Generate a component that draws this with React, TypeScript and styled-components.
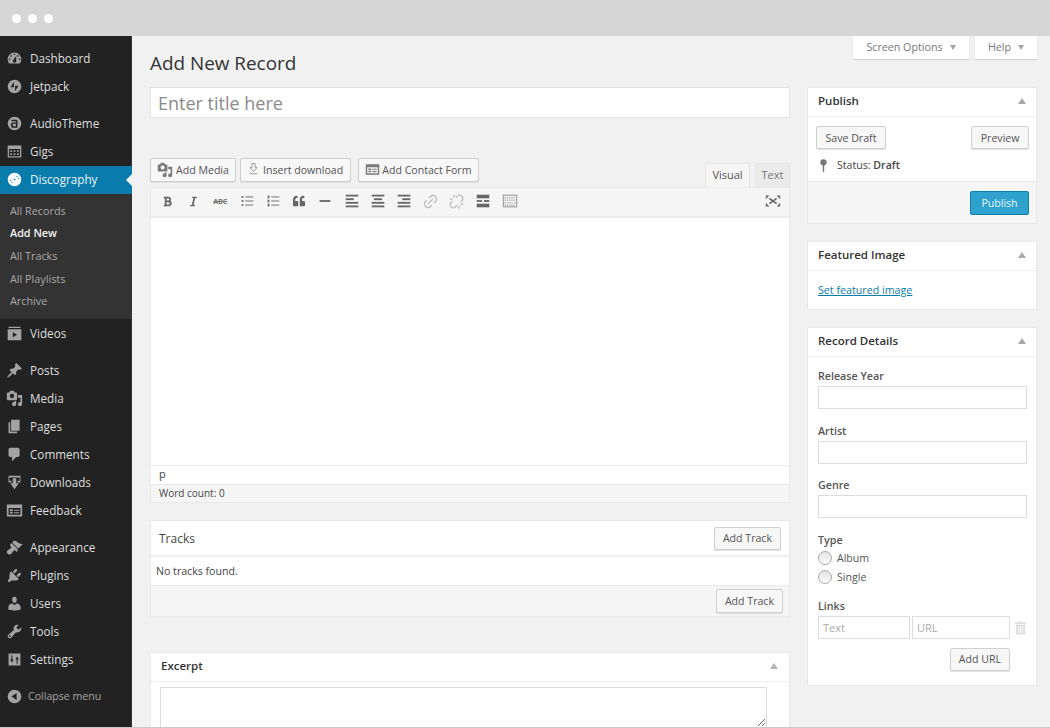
import React from "react";
import styled, { createGlobalStyle } from "styled-components";
import { FaBold, FaItalic, FaQuoteLeft } from "react-icons/fa";
import { Link2, Unlink } from "lucide-react";

const GlobalStyle = createGlobalStyle`
  html, body { margin: 0; padding: 0; height: 100%; overflow: hidden; }
  body { background: #f1f1f1; font-family: "Open Sans", "Liberation Sans", sans-serif; color: #444; }
  * { box-sizing: border-box; }
`;

const Glyph = ({ d }: { d: string }) => (
  <svg viewBox="0 0 20 20" width="100%" height="100%" fill="currentColor">
    <path fillRule="evenodd" d={d} />
  </svg>
);

const mediaPath =
  "M13 11V4c0-.55-.45-1-1-1h-1.670L9 1H5L3.670 3H2c-.55 0-1 .45-1 1v7c0 .55.45 1 1 1h10c.55 0 1-.45 1-1zM7 4.500c1.380 0 2.500 1.120 2.500 2.500S8.380 9.500 7 9.500 4.500 8.380 4.500 7 5.620 4.500 7 4.500zM14 6h5v10.500c0 1.380-1.120 2.500-2.500 2.500S14 17.880 14 16.500s1.120-2.500 2.500-2.500c.170 0 .340.020.500.050V9h-3V6zm-4 8.050V13h2v3.500c0 1.380-1.120 2.500-2.500 2.500S7 17.880 7 16.500 8.120 14 9.500 14c.170 0 .340.020.500.050z";
const formPath =
  "M1 3h18v14H1zM3 7v8h14V7zM4.500 8.500h3.500v2H4.500zM4.500 11.500h3.500v2H4.500zM9.500 9h6v1.200h-6zM9.500 12h6v1.200h-6z";

const menuIcons: Record<string, string> = {
  Dashboard:
    "M3.76 16h12.48c1.1-1.37 1.76-3.11 1.76-5 0-4.42-3.58-8-8-8s-8 3.58-8 8c0 1.89.66 3.63 1.76 5zM10 4c.55 0 1 .45 1 1s-.45 1-1 1-1-.45-1-1 .45-1 1-1zM6 6c.55 0 1 .45 1 1s-.45 1-1 1-1-.45-1-1 .45-1 1-1zm8 0c.55 0 1 .45 1 1s-.45 1-1 1-1-.45-1-1 .45-1 1-1zm-5.37 5.55L12 7v6c0 1.1-.9 2-2 2s-2-.9-2-2c0-.57.24-1.08.63-1.45zM4 10c.55 0 1 .45 1 1s-.45 1-1 1-1-.45-1-1 .45-1 1-1zm12 0c.55 0 1 .45 1 1s-.45 1-1 1-1-.45-1-1 .45-1 1-1z",
  Jetpack: "M10 2a8 8 0 1 1 0 16 8 8 0 0 1 0-16zM9.300 4.500L5.500 11h3.800zM10.700 9v6.500l3.800-6.500z",
  AudioTheme:
    "M10 2a8 8 0 1 1 0 16 8 8 0 0 1 0-16zM6.500 5.500v1.800h5.200v1.400H8a2 2 0 0 0-2 2v2.300a2 2 0 0 0 2 2h5.500V7a1.500 1.500 0 0 0-1.500-1.500zM8 10.300h3.700v3H8z",
  Gigs: "M2 3h16v14H2zM3.500 7v8.500h13V7zM5 8.500h2v2H5zM9 8.500h2v2H9zM13 8.500h2v2h-2zM5 12h2v2H5zM9 12h2v2H9zM13 12h2v2h-2z",
  Discography:
    "M10 2a8 8 0 1 1 0 16 8 8 0 0 1 0-16zM10 9a1 1 0 1 0 0 2 1 1 0 0 0 0-2zM5.500 10.500l-1.200.4.300 1.200 1.200-.4zM14.500 9.500l1.200-.4-.3-1.200-1.200.4zM7 12.500l-.9.900.8.900.9-.9zM13 7.500l.9-.9-.8-.9-.9.9z",
  Videos: "M3 2h14v1.500H3zM2 5h16v13H2zM8 8.500v6l5-3z",
  Posts:
    "M10.440 3.020l1.820-1.820 6.360 6.350-1.830 1.820c-1.050-.68-2.480-.57-3.410.36l-.75.75c-.92.93-1.040 2.350-.35 3.410l-1.830 1.820-2.410-2.410-2.800 2.790c-.42.42-3.380 2.710-3.800 2.290s1.860-3.390 2.280-3.810l2.790-2.790L4.100 9.360l1.830-1.820c1.050.69 2.480.57 3.400-.36l.75-.75c.93-.92 1.050-2.350.36-3.410z",
  Media: mediaPath,
  Pages: "M6 15V2h10v13H6zm-1 1h8v2H3V5h2v11z",
  Comments: "M5 2h9c1.100 0 2 .9 2 2v7c0 1.100-.9 2-2 2h-2l-5 5v-5H5c-1.100 0-2-.9-2-2V4c0-1.100.9-2 2-2z",
  Downloads: "M3 2h14v8h-3.500V8H16V4H4v4h2.500v2H3zM8 5h4v6h3l-5 7-5-7h3z",
  Feedback: formPath,
  Appearance:
    "M14.480 11.060L7.410 3.990l1.500-1.500c.5-.56 2.300-.47 3.510.32 1.210.8 1.430 1.280 2.910 2.100 1.180.64 2.450 1.260 4.450.85zm-.71.71L6.700 4.700 4.930 6.470c-.39.39-.39 1.020 0 1.410l1.060 1.060c.39.39.39 1.030 0 1.420-.6.6-1.430 1.110-2.210 1.690-.35.26-.7.53-1.010.84C1.430 13.230.9 14.500 1 15.500c.03.5.3 1.200.9 1.800.7.7 1.400.9 1.900.9 1 0 2.200-.6 3.100-1.500.3-.3.6-.7.8-1 .6-.8 1.100-1.600 1.700-2.200.4-.4 1-.4 1.400 0l1.100 1.100c.4.4 1 .4 1.400 0z",
  Plugins:
    "M13.110 4.360L9.870 7.600 8 5.730l3.240-3.240c.35-.34 1.050-.2 1.560.32.52.51.66 1.210.31 1.550zm-8 1.770l.91-1.120 9.010 9.010-1.190.84c-.71.71-2.630 1.160-3.820 1.160H6.140L4.900 17.260c-.59.59-1.540.59-2.120 0-.59-.58-.59-1.530 0-2.120l1.240-1.240v-3.880c0-1.130.4-3.190 1.090-3.890zm7.260 3.970l3.240-3.240c.34-.35 1.040-.21 1.550.31.52.51.66 1.210.31 1.550l-3.240 3.250z",
  Users:
    "M10 9.250c-2.270 0-2.730-3.440-2.730-3.440C7 4.020 7.820 2 9.970 2c2.160 0 2.980 2.020 2.710 3.810 0 0-.41 3.440-2.680 3.440zm0 2.570L12.720 10c2.390 0 4.520 2.330 4.520 4.530v2.490s-3.650 1.130-7.240 1.130c-3.650 0-7.240-1.130-7.240-1.130v-2.490c0-2.250 1.940-4.480 4.470-4.480z",
  Tools:
    "M16.680 9.770c-1.340 1.340-3.300 1.670-4.950.99l-5.410 6.520c-.99.99-2.590.99-3.580 0s-.99-2.590 0-3.570l6.520-5.420c-.68-1.650-.35-3.610.99-4.950 1.280-1.280 3.120-1.620 4.720-1.060l-2.890 2.890 2.820 2.820 2.860-2.870c.53 1.580.18 3.390-1.080 4.660zM3.810 16.210c.4.39 1.040.39 1.430 0 .4-.4.4-1.040 0-1.430-.39-.4-1.030-.4-1.430 0-.39.39-.39 1.030 0 1.430z",
  Settings: "M3 3h14v14H3zM6.300 5v5H4.800l2.100 3.500L9 10H7.500V5zM12.500 15v-5H11l2.100-3.500L15.200 10h-1.500v5z",
};

type MenuEntry = { label: string; gap?: boolean };

const topMenu: MenuEntry[] = [
  { label: "Dashboard" },
  { label: "Jetpack" },
  { label: "AudioTheme", gap: true },
  { label: "Gigs" },
];
const bottomMenu: MenuEntry[] = [
  { label: "Videos" },
  { label: "Posts", gap: true },
  { label: "Media" },
  { label: "Pages" },
  { label: "Comments" },
  { label: "Downloads" },
  { label: "Feedback" },
  { label: "Appearance", gap: true },
  { label: "Plugins" },
  { label: "Users" },
  { label: "Tools" },
  { label: "Settings" },
];
const subMenu = ["All Records", "Add New", "All Tracks", "All Playlists", "Archive"];

const lineIcon = (rects: number[][]) => (
  <svg viewBox="0 0 20 20" width="18" height="18" fill="currentColor">
    {rects.map((r, i) => (
      <rect key={i} x={r[0]} y={r[1]} width={r[2]} height={r[3]} />
    ))}
  </svg>
);

const getToolbarIcons = (): React.ReactNode[] => [
  <FaBold size={11} />,
  <FaItalic size={11} />,
  <AbcMark>ABC</AbcMark>,
  lineIcon([[4, 4.5, 2, 2], [8, 5, 9, 1], [4, 9, 2, 2], [8, 9.5, 9, 1], [4, 13.5, 2, 2], [8, 14, 9, 1]]),
  lineIcon([[4, 4, 2, 3], [8, 5, 9, 1], [4, 8.5, 2, 3], [8, 9.5, 9, 1], [4, 13, 2, 3], [8, 14, 9, 1]]),
  <FaQuoteLeft size={12} />,
  lineIcon([[4, 9, 12, 2]]),
  lineIcon([[3, 3, 14, 2], [3, 7, 9, 2], [3, 11, 14, 2], [3, 15, 14, 2]]),
  lineIcon([[3, 3, 14, 2], [5.5, 7, 9, 2], [3, 11, 14, 2], [3, 15, 14, 2]]),
  lineIcon([[3, 3, 14, 2], [8, 7, 9, 2], [3, 11, 14, 2], [3, 15, 14, 2]]),
  <LightIcon><Link2 size={17} strokeWidth={1.8} style={{ transform: "rotate(-45deg)" }} /></LightIcon>,
  <LightIcon><Unlink size={15} strokeWidth={2} /></LightIcon>,
  lineIcon([[3, 3, 14, 4], [3, 9, 6, 2], [11, 9, 6, 2], [3, 13, 14, 4]]),
  <KitchenIcon>
    <svg viewBox="0 0 20 20" width="18" height="18" fill="none" stroke="currentColor">
      <rect x="2.5" y="3.5" width="15" height="13" />
      <path d="M4 6.500h12M4 9h12M4 12h1.500M7 12h6M14.500 12H16M4 14.500h12" strokeDasharray="1.5 1" />
    </svg>
  </KitchenIcon>,
];

const App = () => {
  return (
    <>
      <GlobalStyle />
      <Window>
        <TitleBar>
          <Dot />
          <Dot />
          <Dot />
        </TitleBar>
        <Body>
          <Sidebar>
            {topMenu.map((m) => (
              <MenuRow key={m.label} $gap={m.gap}>
                <MenuIcon>
                  <Glyph d={menuIcons[m.label]} />
                </MenuIcon>
                {m.label}
              </MenuRow>
            ))}
            <ActiveRow>
              <MenuIcon $active>
                <Glyph d={menuIcons.Discography} />
              </MenuIcon>
              Discography
            </ActiveRow>
            <SubMenu>
              {subMenu.map((s) => (
                <SubItem key={s} $current={s === "Add New"}>
                  {s}
                </SubItem>
              ))}
            </SubMenu>
            {bottomMenu.map((m) => (
              <MenuRow key={m.label} $gap={m.gap}>
                <MenuIcon>
                  <Glyph d={menuIcons[m.label]} />
                </MenuIcon>
                {m.label}
              </MenuRow>
            ))}
            <CollapseRow>
              <MenuIcon>
                <Glyph d="M10 2a8 8 0 1 1 0 16 8 8 0 0 1 0-16zM12.500 6l-6 4 6 4z" />
              </MenuIcon>
              Collapse menu
            </CollapseRow>
          </Sidebar>
          <Main>
            <LeftColumn>
              <PageTitle>Add New Record</PageTitle>
              <TitleInput placeholder="Enter title here" />
              <EditorTop>
                <EditorButton $h={24}>
                  <BtnIcon>
                    <Glyph d={mediaPath} />
                  </BtnIcon>
                  Add Media
                </EditorButton>
                <InsertButton $h={24}>
                  <DownloadIcon>
                    <svg viewBox="0 0 20 20" width="100%" height="100%" fill="none" stroke="currentColor" strokeWidth="1.5">
                      <path d="M7.500 2.500h5v6h3L10 15 4.500 8.500h3zM4 18h12" />
                    </svg>
                  </DownloadIcon>
                  Insert download
                </InsertButton>
                <FormButton $h={24}>
                  <FormIcon>
                    <Glyph d={formPath} />
                  </FormIcon>
                  Add Contact Form
                </FormButton>
                <Tabs>
                  <Tab $active>Visual</Tab>
                  <Tab>Text</Tab>
                </Tabs>
              </EditorTop>
              <Toolbar>
                {getToolbarIcons().map((icon, i) => (
                  <ToolButton key={i}>{icon}</ToolButton>
                ))}
                <FullscreenButton>
                  <svg viewBox="0 0 20 20" width="18" height="18" fill="none" stroke="currentColor" strokeWidth="1.8">
                    <path d="M6 7l8 6M14 7l-8 6" />
                    <path fill="currentColor" stroke="none" d="M2 4h4L2 8zM18 4h-4l4 4zM2 16h4l-4-4zM18 16h-4l4-4z" />
                  </svg>
                </FullscreenButton>
              </Toolbar>
              <EditorArea />
              <PathRow>p</PathRow>
              <WordCount>Word count: 0</WordCount>
              <TracksBox>
                <TracksHead>
                  Tracks
                  <Button $h={23}>Add Track</Button>
                </TracksHead>
                <NoTracks>No tracks found.</NoTracks>
                <TracksFoot>
                  <Button $h={24}>Add Track</Button>
                </TracksFoot>
              </TracksBox>
              <ExcerptBox>
                <ExcerptHead>
                  Excerpt
                  <Caret $light />
                </ExcerptHead>
                <ExcerptBody>
                  <ExcerptField />
                </ExcerptBody>
              </ExcerptBox>
            </LeftColumn>
            <RightColumn>
              <ScreenTabs>
                <ScreenTab $w={116}>
                  Screen Options <DownCaret />
                </ScreenTab>
                <ScreenTab $w={62}>
                  Help <DownCaret />
                </ScreenTab>
              </ScreenTabs>
              <PostBox>
                <BoxHead>
                  Publish
                  <Caret />
                </BoxHead>
                <PublishActions>
                  <PublishAction $h={23}>Save Draft</PublishAction>
                  <PublishAction $h={23}>Preview</PublishAction>
                </PublishActions>
                <StatusRow>
                  <svg viewBox="0 0 10 16" width="9" height="15" fill="#777">
                    <circle cx="5" cy="4.5" r="3.5" />
                    <rect x="4.2" y="7" width="1.6" height="8" />
                  </svg>
                  <span>
                    Status: <b>Draft</b>
                  </span>
                </StatusRow>
                <PublishFoot>
                  <PrimaryButton>Publish</PrimaryButton>
                </PublishFoot>
              </PostBox>
              <PostBox $mt={17}>
                <BoxHead>
                  Featured Image
                  <Caret />
                </BoxHead>
                <FeaturedBody>
                  <FeatureLink href="#">Set featured image</FeatureLink>
                </FeaturedBody>
              </PostBox>
              <PostBox $mt={17}>
                <BoxHead>
                  Record Details
                  <Caret />
                </BoxHead>
                <DetailsBody>
                  <FieldLabel>Release Year</FieldLabel>
                  <TextField />
                  <FieldLabel $mt={15}>Artist</FieldLabel>
                  <TextField />
                  <FieldLabel $mt={14}>Genre</FieldLabel>
                  <TextField />
                  <FieldLabel $mt={15}>Type</FieldLabel>
                  <RadioRow $mt={3}>
                    <RadioMark />
                    Album
                  </RadioRow>
                  <RadioRow $mt={5}>
                    <RadioMark />
                    Single
                  </RadioRow>
                  <FieldLabel $mt={15}>Links</FieldLabel>
                  <LinkRow>
                    <LinkField $w={92} placeholder="Text" />
                    <LinkField $w={98} placeholder="URL" />
                    <TrashIcon viewBox="0 0 12 14" width="11" height="14" fill="#dcdcdc">
                      <path fillRule="evenodd" d="M4 0h4v1h4v1.500H0V1h4zM1 3.500h10V14H1zM3 5v7.500h1V5zM5.500 5v7.500h1V5zM8 5v7.500h1V5z" />
                    </TrashIcon>
                  </LinkRow>
                  <AddUrlRow>
                    <Button $h={23}>Add URL</Button>
                  </AddUrlRow>
                </DetailsBody>
              </PostBox>
            </RightColumn>
          </Main>
        </Body>
      </Window>
    </>
  );
};

const Caret = styled.i<{ $light?: boolean }>`
  width: 0;
  height: 0;
  border-left: 4px solid transparent;
  border-right: 4px solid transparent;
  border-bottom: 6px solid ${(p) => (p.$light ? "#b4b4b4" : "#a9a9a9")};
`;

const Window = styled.div`
  display: flex;
  flex-direction: column;
  width: 1050px;
  height: 728px;
  overflow: hidden;
  border-bottom: 1px solid #c9c9c9;
`;

const TitleBar = styled.div`
  display: flex;
  align-items: center;
  gap: 7px;
  flex: 0 0 36px;
  padding-left: 12px;
  background: #d6d6d7;
`;

const Dot = styled.span`
  width: 9px;
  height: 9px;
  border-radius: 50%;
  background: #fff;
`;

const Body = styled.div`
  display: flex;
  flex: 1;
  min-height: 0;
`;

const Sidebar = styled.nav`
  flex: 0 0 132px;
  padding-top: 8px;
  background: #222;
  border-right: 1px solid #333;
  color: #dedede;
  font-size: 11.7px;
`;

const MenuRow = styled.div<{ $gap?: boolean }>`
  display: flex;
  align-items: center;
  height: 28px;
  margin-top: ${(p) => (p.$gap ? "9px" : "0")};
  padding-left: 6px;
`;

const ActiveRow = styled(MenuRow)`
  position: relative;
  margin-top: 1px;
  margin-right: -1px;
  padding-bottom: 2px;
  background: #0a7cab;
  color: #e9f4f8;

  &::after {
    content: "";
    position: absolute;
    right: 0;
    top: 8px;
    border: 6px solid transparent;
    border-left: 0;
    border-right-color: #f1f1f1;
  }
`;

const MenuIcon = styled.span<{ $active?: boolean }>`
  display: flex;
  align-items: center;
  justify-content: center;
  flex: 0 0 17px;
  width: 17px;
  height: 17px;
  margin-right: 7px;
  color: ${(p) => (p.$active ? "#fff" : "#a3a3a3")};
`;

const SubMenu = styled.div`
  display: flex;
  flex-direction: column;
  height: 125px;
  padding-top: 5px;
  background: #333;
`;

const SubItem = styled.div<{ $current?: boolean }>`
  display: flex;
  align-items: center;
  height: 22.6px;
  padding-left: 10px;
  font-size: 10.8px;
  font-weight: ${(p) => (p.$current ? 600 : 400)};
  color: ${(p) => (p.$current ? "#f4f4f4" : "#a9a9a9")};
`;

const CollapseRow = styled(MenuRow)`
  margin-top: 9px;
  font-size: 10.6px;
  color: #a3a3a3;

  ${MenuIcon} {
    margin-right: 5px;
  }
`;

const Main = styled.main`
  display: flex;
  flex: 1;
  gap: 17px;
  padding-left: 18px;
`;

const LeftColumn = styled.div`
  display: flex;
  flex-direction: column;
  flex: 0 0 640px;
  min-width: 0;
`;

const RightColumn = styled.div`
  display: flex;
  flex-direction: column;
  flex: 0 0 230px;
  min-width: 0;
`;

const PageTitle = styled.h1`
  margin: 14px 0 10px;
  font-size: 18.9px;
  line-height: 27px;
  font-weight: 400;
  color: #333;
`;

const TitleInput = styled.input`
  flex: 0 0 31px;
  width: 100%;
  padding: 0 7px;
  border: 1px solid #e2e2e2;
  background: #fff;
  font-family: inherit;
  font-size: 18px;
  outline: none;

  &::placeholder {
    color: #8a8a8a;
    opacity: 1;
  }
`;

const EditorTop = styled.div`
  display: flex;
  flex: 0 0 29px;
  align-items: flex-end;
  gap: 4px;
  margin-top: 40px;
  padding-bottom: 5px;
`;

const Button = styled.button<{ $h: number }>`
  display: inline-flex;
  align-items: center;
  height: ${(p) => p.$h}px;
  padding: 0 8px 1px;
  border: 1px solid #cfcfcf;
  border-radius: 2px;
  background: #f7f7f7;
  box-shadow: 0 1px 0 #e2e2e2;
  color: #555;
  font-family: inherit;
  font-size: 10.6px;
  white-space: nowrap;
`;

const EditorButton = styled(Button)`
  padding-right: 6px;
`;

const InsertButton = styled(Button)`
  padding-right: 7px;
`;

const FormButton = styled(Button)`
  margin-left: 3px;
  padding-right: 7px;
`;

const PublishAction = styled(Button)`
  padding: 0 8.5px;
`;

const BtnIcon = styled.span`
  display: inline-flex;
  width: 16px;
  height: 16px;
  margin: 0 3px 0 -2px;
  color: #7a7a7a;
`;

const FormIcon = styled(BtnIcon)`
  width: 15px;
  height: 15px;
  margin-right: 2px;
`;

const DownloadIcon = styled(BtnIcon)`
  width: 13px;
  height: 13px;
  margin-top: -3px;
  color: #999;
`;

const Tabs = styled.div`
  display: flex;
  align-items: flex-end;
  height: 29px;
  margin-bottom: -5px;
  margin-left: auto;
  gap: 5px;
`;

const Tab = styled.div<{ $active?: boolean }>`
  display: flex;
  align-items: center;
  justify-content: center;
  height: 24px;
  padding-bottom: 3px;
  width: ${(p) => (p.$active ? "45px" : "35px")};
  background: ${(p) => (p.$active ? "#f5f5f5" : "#ebebeb")};
  border: 1px solid #e6e6e6;
  border-bottom: 0;
  font-size: 11px;
  color: ${(p) => (p.$active ? "#555" : "#777")};
`;

const Toolbar = styled.div`
  display: flex;
  flex: 0 0 31px;
  align-items: center;
  padding: 0 3px 2px 3.5px;
  background: #f5f5f5;
  border: 1px solid #eaeaea;
  border-bottom: 2px solid #ececec;
`;

const ToolButton = styled.span`
  display: flex;
  align-items: center;
  justify-content: center;
  flex: 0 0 26.3px;
  height: 26px;
  color: #666;
`;

const FullscreenButton = styled(ToolButton)`
  margin-left: auto;
`;

const AbcMark = styled.span`
  font-size: 7px;
  font-weight: 700;
  color: #777;
  text-decoration: line-through;
`;

const LightIcon = styled.span`
  display: flex;
  color: #bbb;
`;

const KitchenIcon = styled.span`
  display: flex;
  color: #888;
`;

const EditorArea = styled.div`
  flex: 0 0 247px;
  background: #fff;
  border-left: 1px solid #eaeaea;
  border-right: 1px solid #eaeaea;
`;

const PathRow = styled.div`
  display: flex;
  flex: 0 0 19px;
  align-items: center;
  padding: 0 0 3px 8px;
  background: #fff;
  border: 1px solid #eaeaea;
  border-bottom: 0;
  font-size: 11px;
`;

const WordCount = styled.div`
  display: flex;
  flex: 0 0 19px;
  align-items: center;
  padding: 0 0 2px 8px;
  background: #f5f5f5;
  border: 1px solid #e8e8e8;
  font-size: 10px;
`;

const TracksBox = styled.section`
  display: flex;
  flex-direction: column;
  flex: 0 0 97px;
  margin-top: 17px;
  background: #fff;
  border: 1px solid #e8e8e8;
`;

const TracksHead = styled.div`
  display: flex;
  align-items: center;
  justify-content: space-between;
  flex: 0 0 36px;
  padding: 0 8px;
  border-bottom: 2px solid #eee;
  font-size: 12px;
`;

const NoTracks = styled.div`
  display: flex;
  align-items: center;
  flex: 0 0 28px;
  padding-left: 5px;
  font-size: 10.6px;
`;

const TracksFoot = styled.div`
  display: flex;
  align-items: center;
  justify-content: flex-end;
  flex: 1;
  padding-right: 6px;
  background: #f5f5f5;
  border-top: 1px solid #eaeaea;
`;

const ExcerptBox = styled.section`
  display: flex;
  flex-direction: column;
  flex: 1;
  margin-top: 35px;
  background: #fff;
  border: 1px solid #e8e8e8;
`;

const ExcerptHead = styled.div`
  display: flex;
  align-items: center;
  justify-content: space-between;
  flex: 0 0 29px;
  padding: 0 11px 3px 10px;
  border-bottom: 1px solid #eee;
  font-size: 11.5px;
  font-weight: 600;
  color: #333;
`;

const ExcerptBody = styled.div`
  flex: 1;
  padding: 5px 22px 0 9px;
  overflow: hidden;
`;

const ExcerptField = styled.textarea`
  display: block;
  width: 100%;
  height: 41px;
  border: 1px solid #ddd;
  background: #fff;
`;

const ScreenTabs = styled.div`
  display: flex;
  justify-content: flex-end;
  gap: 6px;
  height: 23px;
  margin-bottom: 28px;
`;

const ScreenTab = styled.div<{ $w: number }>`
  display: flex;
  align-items: center;
  justify-content: center;
  gap: 7px;
  width: ${(p) => p.$w}px;
  padding-bottom: 1px;
  background: #fff;
  box-shadow: 0 1px 1px rgba(0, 0, 0, 0.12);
  font-size: 10.7px;
  color: #777;
`;

const DownCaret = styled.i`
  width: 0;
  height: 0;
  border-left: 3.5px solid transparent;
  border-right: 3.5px solid transparent;
  border-top: 5px solid #a5a5a5;
`;

const PostBox = styled.section<{ $mt?: number }>`
  margin-top: ${(p) => p.$mt ?? 0}px;
  background: #fff;
  border: 1px solid #e8e8e8;
`;

const BoxHead = styled.div`
  display: flex;
  align-items: center;
  justify-content: space-between;
  height: 29px;
  padding: 0 10px 3px;
  border-bottom: 1px solid #eee;
  font-size: 11.5px;
  font-weight: 600;
  color: #333;
`;

const PublishActions = styled.div`
  display: flex;
  justify-content: space-between;
  padding: 9px 7px 0 8px;
`;

const StatusRow = styled.div`
  display: flex;
  align-items: center;
  gap: 9px;
  height: 32px;
  padding-left: 11px;
  font-size: 10.6px;

  b {
    font-weight: 600;
  }
`;

const PublishFoot = styled.div`
  display: flex;
  align-items: flex-start;
  justify-content: flex-end;
  height: 42px;
  padding: 9px 7px 0 0;
  background: #f5f5f5;
  border-top: 1px solid #e8e8e8;
`;

const PrimaryButton = styled.button`
  width: 59px;
  height: 24px;
  border: 1px solid #0d7fa8;
  border-radius: 2px;
  background: #2ea2cc;
  color: #e8f6fb;
  font-family: inherit;
  font-size: 10.6px;
`;

const FeaturedBody = styled.div`
  display: flex;
  align-items: center;
  height: 38px;
  padding-left: 10px;
`;

const FeatureLink = styled.a`
  font-size: 10.7px;
  color: #0a7cab;
`;

const DetailsBody = styled.div`
  display: flex;
  flex-direction: column;
  height: 328px;
  padding: 12px 10px 0;
`;

const FieldLabel = styled.div<{ $mt?: number }>`
  margin-top: ${(p) => p.$mt ?? 0}px;
  height: 15px;
  line-height: 15px;
  font-size: 10.7px;
  font-weight: 600;
  color: #555;
`;

const TextField = styled.input`
  flex: 0 0 23px;
  width: 209px;
  margin-top: 2px;
  border: 1px solid #ddd;
  background: #fff;
`;

const RadioRow = styled.div<{ $mt: number }>`
  display: flex;
  align-items: center;
  gap: 5px;
  margin-top: ${(p) => p.$mt}px;
  height: 14px;
  font-size: 10.6px;
  color: #555;
`;

const RadioMark = styled.i`
  width: 14px;
  height: 14px;
  border: 1px solid #aaa;
  border-radius: 50%;
  background: linear-gradient(#e4e4e4, #fafafa);
`;

const LinkRow = styled.div`
  display: flex;
  align-items: center;
  gap: 2px;
  margin-top: 2px;
`;

const LinkField = styled.input<{ $w: number }>`
  width: ${(p) => p.$w}px;
  height: 23px;
  padding: 0 4px;
  border: 1px solid #ddd;
  background: #fff;
  font-family: inherit;
  font-size: 11px;

  &::placeholder {
    color: #aaa;
    opacity: 1;
  }
`;

const TrashIcon = styled.svg`
  margin-left: 3px;
`;

const AddUrlRow = styled.div`
  display: flex;
  justify-content: flex-end;
  width: 192px;
  margin-top: 9px;
`;

export default App;
